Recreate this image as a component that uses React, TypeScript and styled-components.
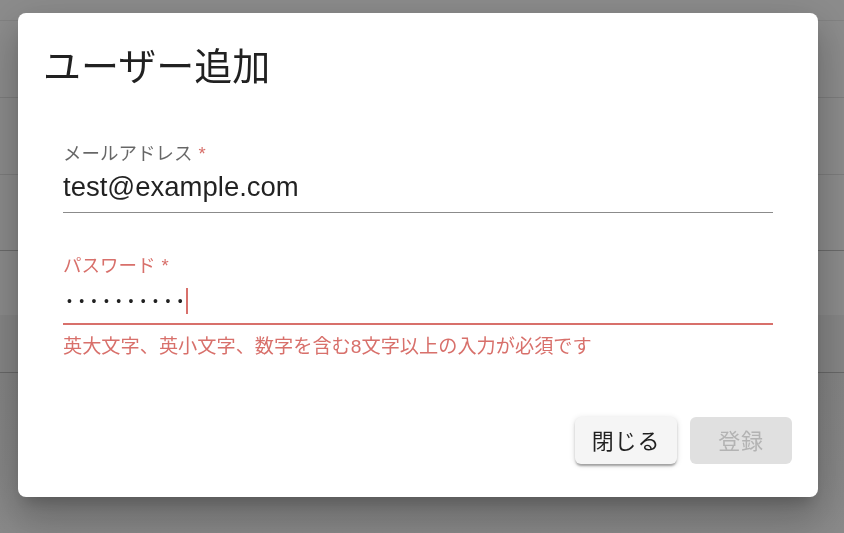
import React from "react";
import styled, { createGlobalStyle } from "styled-components";

const GlobalStyle = createGlobalStyle`
  html, body { margin: 0; padding: 0; }
  body {
    width: 844px;
    height: 533px;
    overflow: hidden;
    background: #8d8d8d;
    font-family: "Liberation Sans", "Noto Sans CJK JP", sans-serif;
  }
`;

const Page = styled.div`
  width: 844px;
  height: 533px;
  display: flex;
  flex-direction: column;
  background: #8d8d8d;
`;

const BgRow = styled.div<{ $h: number; $line: string; $bg?: string }>`
  height: ${(p) => p.$h}px;
  flex: none;
  border-bottom: 1px solid ${(p) => p.$line};
  background: ${(p) => p.$bg || "transparent"};
`;

const BgRest = styled.div`
  flex: 1;
  background: linear-gradient(#858585, #8a8a8a);
`;

const Dialog = styled.div`
  position: fixed;
  left: 18px;
  top: 13px;
  width: 800px;
  background: #ffffff;
  border-radius: 8px;
  display: flex;
  flex-direction: column;
  box-shadow: 0px 11px 15px -7px rgba(0, 0, 0, 0.2),
    0px 24px 38px 3px rgba(0, 0, 0, 0.14), 0px 9px 46px 8px rgba(0, 0, 0, 0.12);
`;

const Title = styled.h2`
  margin: 0;
  padding: 28px 26px 0 25px;
  font-family: "Noto Sans CJK JP", sans-serif;
  font-weight: 400;
  font-size: 38px;
  line-height: 46px;
  height: 48px;
  color: rgba(0, 0, 0, 0.87);
`;

const Content = styled.div`
  padding: 53px 45px 0 45px;
  display: flex;
  flex-direction: column;
`;

const Field = styled.div<{ $gap?: number }>`
  display: flex;
  flex-direction: column;
  margin-top: ${(p) => p.$gap || 0}px;
`;

const Label = styled.label<{ $error?: boolean }>`
  font-family: "Liberation Sans", "Noto Sans CJK JP", sans-serif;
  font-size: 18.5px;
  line-height: 24px;
  height: 24px;
  color: ${(p) => (p.$error ? "#d8706b" : "rgba(0, 0, 0, 0.6)")};
`;

const Asterisk = styled.span`
  color: #d8706b;
  margin-left: 6px;
`;

const Input = styled.input`
  display: block;
  box-sizing: content-box;
  height: 42px;
  padding: 0 0 4px 0;
  margin: 0;
  border: none;
  border-bottom: 1px solid #8b8b8b;
  outline: none;
  background: transparent;
  font-family: "Liberation Sans", "Noto Sans CJK JP", sans-serif;
  font-size: 27.5px;
  color: rgba(0, 0, 0, 0.87);
  line-height: 42px;
`;

const PasswordBox = styled.div`
  height: 45px;
  border-bottom: 2px solid #d8706b;
  display: flex;
  align-items: center;
`;

const Dots = styled.span`
  font-family: "Liberation Sans", sans-serif;
  font-size: 14px;
  letter-spacing: 7.4px;
  padding-left: 4px;
  color: rgba(0, 0, 0, 0.87);
  line-height: 1;
`;

const Caret = styled.span`
  display: inline-block;
  width: 2px;
  height: 26px;
  margin-left: -4px;
  background: #d8706b;
`;

const Helper = styled.p`
  margin: 10px 0 0 0;
  font-family: "Liberation Sans", "Noto Sans CJK JP", sans-serif;
  font-size: 19.2px;
  line-height: 24px;
  color: #d8706b;
`;

const Actions = styled.div`
  display: flex;
  justify-content: flex-end;
  gap: 13px;
  padding: 58px 26px 33px 26px;
`;

const Button = styled.button<{ $disabled?: boolean }>`
  width: 102px;
  height: 47px;
  border: none;
  border-radius: 6px;
  font-family: "Noto Sans CJK JP", sans-serif;
  font-size: 22px;
  line-height: 1;
  letter-spacing: 0.8px;
  padding: 0 0 4px 0;
  background: ${(p) => (p.$disabled ? "#e0e0e0" : "#f5f5f5")};
  color: ${(p) => (p.$disabled ? "#b3b3b3" : "rgba(0, 0, 0, 0.87)")};
  box-shadow: ${(p) =>
    p.$disabled
      ? "none"
      : "0px 3px 2px -1px rgba(0,0,0,0.22), 0px 2px 3px 0px rgba(0,0,0,0.14), 0px 1px 6px 0px rgba(0,0,0,0.12)"};
  cursor: ${(p) => (p.$disabled ? "default" : "pointer")};
`;

export default function App() {
  return (
    <>
      <GlobalStyle />
      <Page>
        <BgRow $h={20} $line="#838383" />
        <BgRow $h={76} $line="#7e7e7e" />
        <BgRow $h={76} $line="#7e7e7e" />
        <BgRow $h={75} $line="#6c6c6c" />
        <BgRow $h={64} $line="#878787" />
        <BgRow $h={56} $line="#696969" $bg="#878787" />
        <BgRest />
      </Page>
      <Dialog role="dialog">
        <Title>ユーザー追加</Title>
        <Content>
          <Field>
            <Label>
              メールアドレス<Asterisk>*</Asterisk>
            </Label>
            <Input type="email" defaultValue="test@example.com" readOnly />
          </Field>
          <Field $gap={41}>
            <Label $error>
              パスワード<Asterisk>*</Asterisk>
            </Label>
            <PasswordBox>
              <Dots>••••••••••</Dots>
              <Caret />
            </PasswordBox>
            <Helper>英大文字、英小文字、数字を含む8文字以上の入力が必須です</Helper>
          </Field>
        </Content>
        <Actions>
          <Button>閉じる</Button>
          <Button $disabled disabled>
            登録
          </Button>
        </Actions>
      </Dialog>
    </>
  );
}
